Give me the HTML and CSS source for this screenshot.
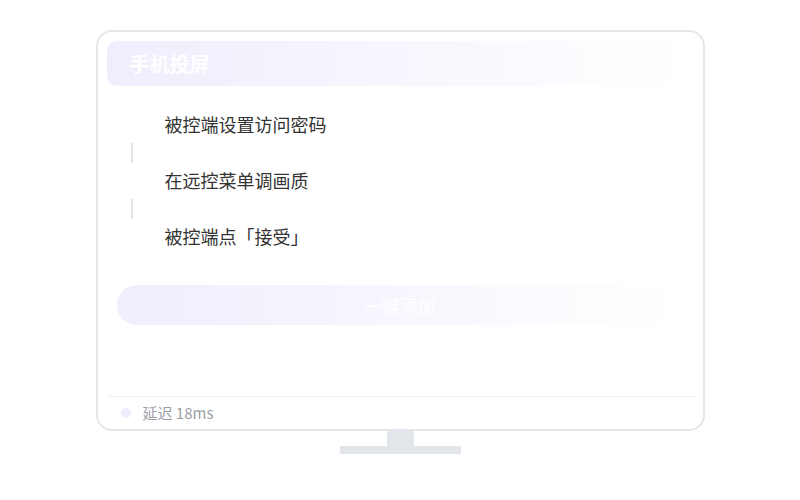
FILE: index.html
```html
<!DOCTYPE html>
<html lang="zh-CN">
  <head>
    <meta charset="UTF-8" />
    <title>手机投屏</title>
    <link rel="stylesheet" href="styles.css">
  </head>
  <body>
    <div class="monitor">
      <div class="screen">
        <div class="title-bar">手机投屏</div>

        <div class="steps">
          <div class="step">
            <span class="marker"></span>
            <span class="step-text">被控端设置访问密码</span>
          </div>
          <div class="connector"></div>
          <div class="step">
            <span class="marker"></span>
            <span class="step-text">在远控菜单调画质</span>
          </div>
          <div class="connector"></div>
          <div class="step">
            <span class="marker"></span>
            <span class="step-text">被控端点「接受」</span>
          </div>
        </div>

        <button class="add-btn">一键添加</button>

        <div class="status">
          <span class="dot"></span>
          <span class="status-text">延迟 18ms</span>
        </div>
      </div>
    </div>
    <div class="neck"></div>
    <div class="base"></div>
  </body>
</html>
```

FILE: styles.css
```css
body {
  background: #ffffff;
  font-family: "Noto Sans CJK SC", "Noto Sans", Arial, sans-serif;
  margin: 0;
  padding-top: 30px;
  display: flex;
  flex-direction: column;
  align-items: center;
}
.monitor {
  width: 609px;
  height: 401px;
  box-sizing: border-box;
  border: 2px solid #e3e6ea;
  border-radius: 16px;
  background: #ffffff;
}
.screen {
  height: 100%;
  box-sizing: border-box;
  padding: 9px 9px 0 9px;
  display: flex;
  flex-direction: column;
}
.title-bar {
  height: 45px;
  border-radius: 10px;
  background: linear-gradient(90deg, #f1edfd, rgba(255, 255, 255, 0));
  color: #ffffff;
  font-size: 20px;
  font-weight: bold;
  padding-left: 23px;
  display: flex;
  align-items: center;
}
.steps {
  margin-top: 21px;
}
.step {
  height: 36px;
  display: flex;
  align-items: center;
}
.marker {
  width: 24px;
  height: 24px;
  margin-left: 13px;
  margin-right: 21px;
}
.step-text {
  font-size: 18px;
  line-height: 24px;
  padding-bottom: 3px;
  color: #333333;
}
.connector {
  width: 2px;
  height: 20px;
  margin-left: 24px;
  background: #e2e4ea;
}
.add-btn {
  margin: 30px 0 0 10px;
  width: 566px;
  height: 40px;
  border: none;
  border-radius: 20px;
  background: linear-gradient(90deg, #f1edfd, rgba(255, 255, 255, 0));
  color: #ffffff;
  font-family: inherit;
  font-size: 18px;
  cursor: pointer;
}
.status {
  margin-top: auto;
  height: 33px;
  box-sizing: border-box;
  border-top: 1px solid #eef0f3;
  padding: 6px 0 0 14px;
  display: flex;
  align-items: flex-start;
}
.dot {
  width: 10px;
  height: 10px;
  border-radius: 50%;
  background: #efebfd;
  margin-top: 5px;
  margin-right: 12px;
}
.status-text {
  font-size: 15px;
  line-height: 20px;
  color: #9a9ea6;
}
.neck {
  width: 27px;
  height: 15px;
  background: #e2e5e9;
}
.base {
  width: 121px;
  height: 8px;
  background: #e2e5e9;
}
```
